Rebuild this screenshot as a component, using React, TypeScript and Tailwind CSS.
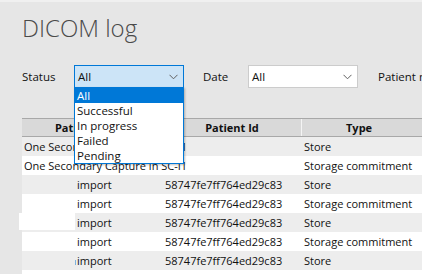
import { useState } from 'react';

type Row = { name?: string; source?: string; id?: string; type: string; patch?: 'white' | 'mark' };

const rows: Row[] = [
  { name: 'One Secondary Capture in SC-I1', type: 'Store' },
  { name: 'One Secondary Capture in SC-I1', type: 'Storage commitment' },
  { source: 'import', id: '58747fe7ff764ed29c83', type: 'Store' },
  { source: 'import', id: '58747fe7ff764ed29c83', type: 'Storage commitment' },
  { source: 'import', id: '58747fe7ff764ed29c83', type: 'Store', patch: 'white' },
  { source: 'import', id: '58747fe7ff764ed29c83', type: 'Storage commitment' },
  { source: 'import', id: '58747fe7ff764ed29c83', type: 'Store', patch: 'mark' },
  { type: '' },
];

const statusOptions = ['All', 'Successful', 'In progress', 'Failed', 'Pending'];

function Chevron() {
  return (
    <svg width="9" height="6" viewBox="0 0 9 6" className="shrink-0">
      <path d="M0.5 0.8 L4.5 4.8 L8.5 0.8" fill="none" stroke="#606060" strokeWidth="1" />
    </svg>
  );
}

function Select({ value, active }: { value: string; active?: boolean }) {
  return (
    <div
      className={
        active
          ? 'flex shrink-0 items-center justify-between w-[110px] h-[23px] pl-[3px] pr-[5px] border border-[#0078d7] bg-[#cce4f7]'
          : 'flex shrink-0 items-center justify-between w-[110px] h-[23px] pl-[3px] pr-[5px] border border-[#cccccc] bg-white'
      }
    >
      <span className="text-[11.5px] text-[#111]">{value}</span>
      <Chevron />
    </div>
  );
}

export default function App() {
  const [selected] = useState(0);

  return (
    <div
      className="relative w-[422px] h-[274px] overflow-hidden bg-[#e6e6e6] border-t-2 border-[#f0f0f0] text-[#111]"
      style={{ fontFamily: '"Open Sans", "Noto Sans", sans-serif' }}
    >
      <h1 className="pl-[22px] pt-[10px] h-[42px] text-[24px] leading-[32px] font-light text-[#4a4a4a]">
        DICOM log
      </h1>

      <div className="mt-[21px] flex items-center h-[23px] pl-[22px] text-[11.5px]">
        <span className="shrink-0 w-[52px]">Status</span>
        <div className="relative shrink-0">
          <Select value="All" active />
          <div className="absolute left-0 top-[22px] z-10 w-[110px] border border-[#0078d7] bg-white shadow-[1px_1px_2px_rgba(0,0,0,0.25)]">
            {statusOptions.map((o, i) => (
              <div
                key={o}
                className={
                  i === selected
                    ? 'h-[15px] pl-[2px] leading-[15px] bg-[#0078d7] text-white'
                    : 'h-[15px] pl-[2px] leading-[15px] text-[#111]'
                }
              >
                {o}
              </div>
            ))}
          </div>
        </div>
        <span className="shrink-0 ml-[19px] w-[45px]">Date</span>
        <Select value="All" />
        <span className="shrink-0 ml-[20px] whitespace-nowrap">Patient name</span>
      </div>

      <div className="mt-[30px] ml-[22px] text-[11px]">
        <div className="grid grid-cols-[141px_139px_1fr] h-[19px] border-t border-b border-[#a8a8a8] bg-[#d9d9d9] font-bold leading-[17px]">
          <div className="text-center border-r border-[#c4c4c4]">Patient name</div>
          <div className="text-center border-r border-[#f4f4f4]">Patient Id</div>
          <div className="pl-[44px]">Type</div>
        </div>
        {rows.map((r, i) => (
          <div
            key={i}
            className={
              i % 2 === 0
                ? 'grid grid-cols-[141px_139px_1fr] h-[19px] leading-[19px] bg-[#ededed]'
                : 'grid grid-cols-[141px_139px_1fr] h-[19px] leading-[19px] bg-white'
            }
          >
            {r.name ? (
              <div className="col-span-2 pl-[2px] whitespace-nowrap">{r.name}</div>
            ) : (
              <>
                <div className="flex items-center">
                  <div className="relative w-[55px] h-[19px]">
                    {r.patch === 'white' && <div className="absolute -left-[3px] top-0 w-[56px] h-[17px] bg-white" />}
                    {r.patch === 'mark' && <div className="absolute right-[1px] top-[9px] w-px h-[5px] bg-[#7fb2dc]" />}
                  </div>
                  <span>{r.source}</span>
                </div>
                <div className="pl-[2px] whitespace-nowrap">{r.id}</div>
              </>
            )}
            <div className="pl-[2px] whitespace-nowrap">{r.type}</div>
          </div>
        ))}
      </div>
    </div>
  );
}
